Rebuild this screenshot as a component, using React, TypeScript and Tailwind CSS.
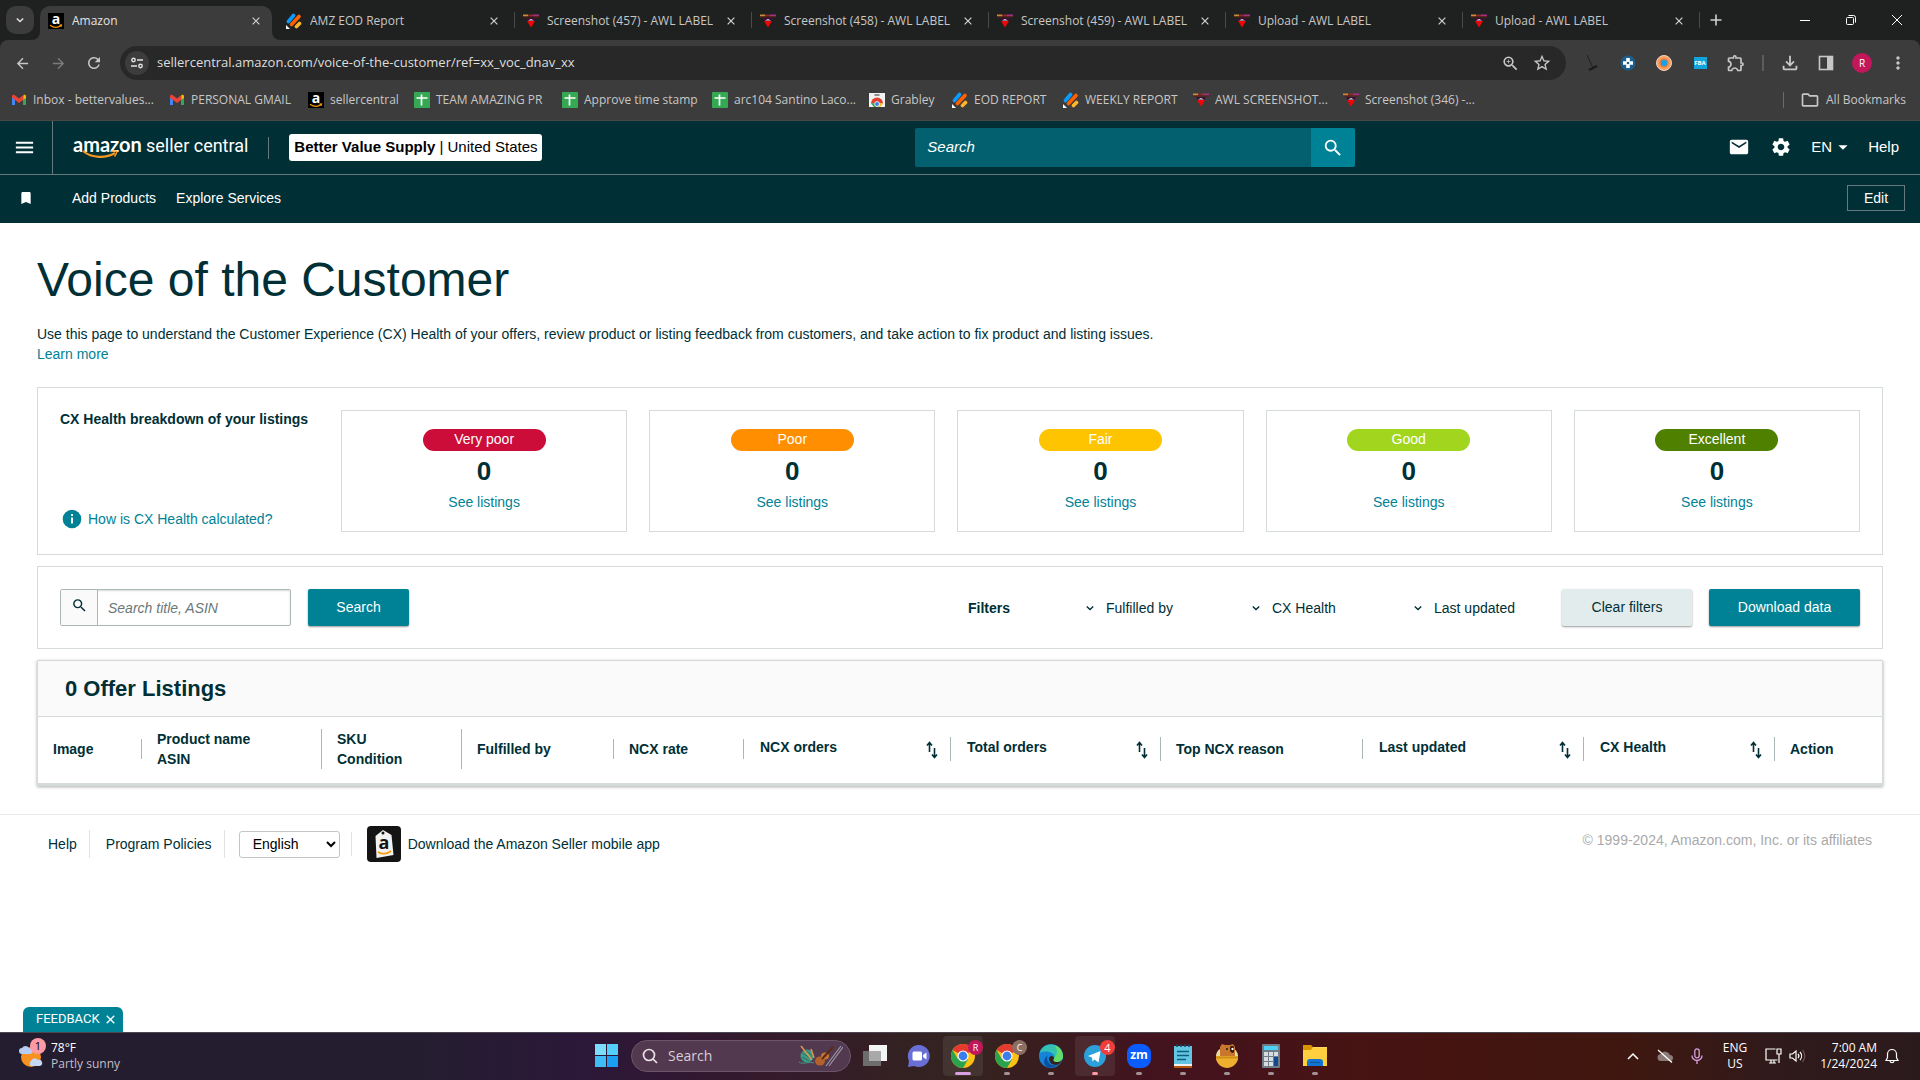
import type { ReactNode } from "react";
import {
  MdArrowBack,
  MdArrowForward,
  MdRefresh,
  MdZoomIn,
  MdStarBorder,
  MdOutlineExtension,
  MdOutlineFileDownload,
  MdMoreVert,
  MdMail,
  MdSettings,
  MdSearch,
  MdBookmark,
  MdMenu,
  MdArrowDropDown,
  MdOutlineFolder,
} from "react-icons/md";

/* -----------------------------Small icons-------------------------------- */

const AmazonIcon = () => (
  <svg viewBox="0 0 16 16" className="size-4 shrink-0 overflow-visible">
    <rect width="16" height="16" fill="#000" />
    <text x="8" y="11" textAnchor="middle" fontFamily="Open Sans, sans-serif" fontWeight="700" fontSize="14" fill="#fff">a</text>
    <path d="M2 12.200c3.500 2.400 8 2.400 11 .6M11.500 12.200l2-.2-.5 1.800" stroke="#f90" strokeWidth="1.200" fill="none" />
  </svg>
);

const JotIcon = () => (
  <svg viewBox="0 0 16 16" className="size-4 shrink-0" strokeLinecap="round" fill="none">
    <path d="M2.500 8.500 7.500 2.500" stroke="#0a9bff" strokeWidth="3.600" />
    <path d="M5.500 11.500 13 3.500" stroke="#ff6100" strokeWidth="3.600" />
    <path d="M10.500 13.500 13.500 10.500" stroke="#ffb629" strokeWidth="3.600" />
    <path d="M0 12v4h4z" fill="#fff" />
  </svg>
);

const AwlIcon = () => (
  <svg viewBox="0 0 16 16" className="size-4 shrink-0">
    <path d="M0 2.500h5" stroke="#c98a3a" strokeWidth="2" />
    <path d="M5 2.500h5" stroke="#8b2b2b" strokeWidth="2" />
    <path d="M10 2.500h6" stroke="#a5307f" strokeWidth="2" />
    <path d="M0 4h16" stroke="#5b1a12" strokeWidth="1" />
    <path d="M3 5h10l-1.500 3h-7z" fill="#3c1030" />
    <path d="M5 7.500 8 6l3 1.500z" fill="#dfe6ff" />
    <path d="M4 8h8L8 14.500z" fill="#f00505" />
  </svg>
);

const GmailIcon = () => (
  <svg viewBox="0 0 16 16" className="size-4 shrink-0">
    <path d="M1 4.500v8.500h3V7z" fill="#4285f4" />
    <path d="M15 4.500v8.500h-3V7z" fill="#34a853" />
    <path d="M12 4.200V8l3-2.300V4.300c0-1.500-1.500-2-2.500-1.200z" fill="#fbbc04" />
    <path d="M1 4.300C1 2.800 2.500 2.300 3.500 3.100L8 6.600l4.500-3.500V7.700L8 11 1 5.700z" fill="#ea4335" />
  </svg>
);

const SheetIcon = () => (
  <svg viewBox="0 0 16 16" className="size-4 shrink-0">
    <rect width="16" height="16" rx="1" fill="#34a853" />
    <path d="M2.500 6h11M7.500 2.500v11" stroke="#fff" strokeWidth="1.700" />
  </svg>
);

const GrableyIcon = () => (
  <svg viewBox="0 0 16 16" className="size-4 shrink-0">
    <path d="M0 1h16v14H0z" fill="#f1f1f1" />
    <path d="M5.500 3h5" stroke="#555" strokeWidth="1.300" />
    <path d="M2 11.500a6 6 0 0 1 12 0z" fill="#e4402f" />
    <path d="M2 11.500 5 15h3l-2-4z" fill="#2ea44f" />
    <path d="M14 11.500 11 15H8l2-4z" fill="#fbc116" />
    <circle cx="8" cy="12" r="2.400" fill="#3b7ded" stroke="#fff" strokeWidth=".8" />
  </svg>
);

const Cross = ({ size = "size-2" }: { size?: string }) => (
  <svg viewBox="0 0 10 10" className={size} stroke="currentColor" strokeWidth="1.500">
    <path d="M.8.8l8.400 8.400M9.200.8.8 9.200" />
  </svg>
);

const SmallChevron = () => (
  <svg viewBox="0 0 10 8" className="w-2 h-2 shrink-0" fill="none" stroke="currentColor" strokeWidth="1.700">
    <path d="M1 2l4 4 4-4" />
  </svg>
);

const SortIcon = () => (
  <svg viewBox="0 0 12 18" className="w-3 h-[18px] shrink-0" fill="none" stroke="currentColor" strokeWidth="1.600">
    <path d="M3.500 11V2M1 4.500 3.500 1.500 6 4.500" />
    <path d="M8.500 7v9M6 13.500l2.500 3 2.500-3" />
  </svg>
);

/* -----------------------------Browser chrome-------------------------------- */

const tabs = [
  { title: "Amazon", icon: <AmazonIcon />, active: true },
  { title: "AMZ EOD Report", icon: <JotIcon /> },
  { title: "Screenshot (457) - AWL LABEL", icon: <AwlIcon /> },
  { title: "Screenshot (458) - AWL LABEL", icon: <AwlIcon /> },
  { title: "Screenshot (459) - AWL LABEL", icon: <AwlIcon /> },
  { title: "Upload - AWL LABEL", icon: <AwlIcon /> },
  { title: "Upload - AWL LABEL", icon: <AwlIcon /> },
];

const bookmarks = [
  { title: "Inbox - bettervalues...", icon: <GmailIcon />, width: "w-[138px]" },
  { title: "PERSONAL GMAIL", icon: <GmailIcon />, width: "w-[119px]" },
  { title: "sellercentral", icon: <AmazonIcon />, width: "w-[86px]" },
  { title: "TEAM AMAZING PR", icon: <SheetIcon />, width: "w-[128px]" },
  { title: "Approve time stamp", icon: <SheetIcon />, width: "w-[130px]" },
  { title: "arc104 Santino Laco...", icon: <SheetIcon />, width: "w-[137px]" },
  { title: "Grabley", icon: <GrableyIcon />, width: "w-[63px]" },
  { title: "EOD REPORT", icon: <JotIcon />, width: "w-[91px]" },
  { title: "WEEKLY REPORT", icon: <JotIcon />, width: "w-[110px]" },
  { title: "AWL SCREENSHOT...", icon: <AwlIcon />, width: "w-[130px]" },
  { title: "Screenshot (346) -...", icon: <AwlIcon />, width: "w-[128px]" },
];

function TabStrip() {
  return (
    <div className="flex h-10 bg-[#1f2120] pl-[6px]">
      <button aria-label="Search tabs" className="mt-[6px] mr-[6px] size-7 shrink-0 rounded-[10px] bg-[#3c3c3c] flex items-center justify-center text-[#e3e3e3]">
        <SmallChevron />
      </button>
      {tabs.map((tab, i) => (
        <div key={i} className={tab.active ? "relative w-[238px] pt-[6px] pr-[6px]" : "relative w-[237px] pt-[6px] pr-[5px]"}>
          <div className={tab.active ? "relative h-[34px] rounded-t-[10px] bg-[#3c3c3c] pb-[5px] pl-2 pr-3 flex items-center gap-2" : "h-[34px] pb-[5px] pl-2 pr-3 flex items-center gap-2"}>
            {tab.icon}
            <span className={tab.active ? "flex-1 truncate text-[#e3e3e3]" : "flex-1 truncate text-[#c7c7c7]"}>{tab.title}</span>
            <button aria-label="Close tab" className="text-[#d0d0d0]"><Cross /></button>
            {tab.active && (
              <>
                <svg viewBox="0 0 8 8" className="absolute -left-2 bottom-0 size-2" fill="#3c3c3c"><path d="M8 0v8H0a8 8 0 0 0 8-8" /></svg>
                <svg viewBox="0 0 8 8" className="absolute -right-2 bottom-0 size-2" fill="#3c3c3c"><path d="M0 0v8h8a8 8 0 0 1-8-8" /></svg>
              </>
            )}
          </div>
          {!tab.active && <span className="absolute right-0 top-3 h-4 w-px bg-[#4a4a4a]" />}
        </div>
      ))}
      <button aria-label="New tab" className="w-8 flex items-center justify-center text-[#d0d0d0]">
        <svg viewBox="0 0 12 12" className="size-3" stroke="currentColor" strokeWidth="1.600"><path d="M6 .5v11M.5 6h11" /></svg>
      </button>
      <div className="ml-auto flex text-white">
        <button aria-label="Minimize" className="w-[46px] flex items-center justify-center"><svg viewBox="0 0 10 10" className="size-[10px]" stroke="currentColor"><path d="M0 5.500h10" /></svg></button>
        <button aria-label="Restore" className="w-[46px] flex items-center justify-center">
          <svg viewBox="0 0 10 10" className="size-[10px]" fill="none" stroke="currentColor">
            <rect x=".5" y="2.500" width="7" height="7" rx="1" />
            <path d="M2.500.5H7.500a2 2 0 0 1 2 2V7.500" />
          </svg>
        </button>
        <button aria-label="Close" className="w-[46px] flex items-center justify-center"><svg viewBox="0 0 10 10" className="size-[10px]" stroke="currentColor"><path d="M0 0l10 10M10 0 0 10" /></svg></button>
      </div>
    </div>
  );
}

function ToolButton({ label, children }: { label: string; children: ReactNode }) {
  return <button aria-label={label} className="w-9 shrink-0 flex items-center justify-center">{children}</button>;
}

function Toolbar() {
  return (
    <div className="bg-[#1f2120]">
      <div className="flex h-[41px] items-stretch rounded-t-lg bg-[#3c3c3c] px-1 pt-[6px] pb-[1px] text-[#c7c7c7]">
        <ToolButton label="Back"><MdArrowBack className="size-[17px]" /></ToolButton>
        <ToolButton label="Forward"><MdArrowForward className="size-[17px] text-[#7c7c7c]" /></ToolButton>
        <ToolButton label="Reload"><MdRefresh className="size-[18px]" /></ToolButton>
        <div className="ml-2 flex flex-1 items-center rounded-full bg-[#282828] pl-[5px] pr-2">
          <span className="size-6 rounded-full bg-[#3c3c3c] flex items-center justify-center">
            <svg viewBox="0 0 12 12" className="size-3" fill="none" stroke="#e3e3e3" strokeWidth="1.400">
              <circle cx="2.500" cy="3" r="1.700" /><path d="M6 3h6M0 9h6" /><circle cx="9.500" cy="9" r="1.700" />
            </svg>
          </span>
          <input aria-label="Address" className="ml-2 flex-1 bg-transparent text-[13px] text-[#dedede] outline-none" defaultValue="sellercentral.amazon.com/voice-of-the-customer/ref=xx_voc_dnav_xx" />
          <button aria-label="Zoom" className="w-8 flex justify-center"><MdZoomIn className="size-[19px]" /></button>
          <button aria-label="Bookmark this tab" className="w-8 flex justify-center"><MdStarBorder className="size-5" /></button>
        </div>
        <div className="ml-2 flex">
          <ToolButton label="Pen tool">
            <svg viewBox="0 0 16 16" className="size-4" fill="none" stroke="#1b1b1b"><path d="M3 0l6 13" strokeWidth=".8" /><path d="M5 15l8-4" strokeWidth="2" /></svg>
          </ToolButton>
          <ToolButton label="Helper">
            <svg viewBox="0 0 16 16" className="size-4"><circle cx="8" cy="8" r="7.500" fill="#1c5f8f" /><path d="M8 3v10M3 8h10" stroke="#fff" strokeWidth="3.600" /><circle cx="8" cy="8" r="1.300" fill="#1c5f8f" /></svg>
          </ToolButton>
          <ToolButton label="Keepa">
            <svg viewBox="0 0 16 16" className="size-4"><circle cx="8" cy="8" r="7.500" fill="#f6a06a" stroke="#fbd3b4" /><circle cx="8" cy="8" r="4.800" fill="#f07f35" /><circle cx="8" cy="8" r="3.200" fill="#1ba0e8" /></svg>
          </ToolButton>
          <ToolButton label="FBA calculator">
            <span className="w-[13px] h-3 bg-[#12a5dd] text-[6px] leading-3 font-bold text-white">FBA</span>
          </ToolButton>
          <ToolButton label="Extensions"><MdOutlineExtension className="size-5" /></ToolButton>
          <span className="mx-2 my-auto h-4 w-[2px] bg-[#5c5c5c]" />
          <ToolButton label="Downloads"><MdOutlineFileDownload className="size-[22px]" /></ToolButton>
          <ToolButton label="Side panel">
            <svg viewBox="0 0 16 16" className="size-4"><rect x="1.500" y="1.500" width="13" height="13" fill="none" stroke="currentColor" strokeWidth="1.600" /><path d="M9 1h6v14H9z" fill="currentColor" /></svg>
          </ToolButton>
          <ToolButton label="Profile"><span className="size-5 rounded-full bg-[#c2185b] text-[10px] leading-5 text-white">R</span></ToolButton>
          <ToolButton label="Menu"><MdMoreVert className="size-5" /></ToolButton>
        </div>
      </div>
    </div>
  );
}

function BookmarksBar() {
  return (
    <nav className="flex h-10 items-center gap-5 border-b border-[#4a4845] bg-[#3c3c3c] pl-[11px] pr-[14px] pb-[1px] text-[#c7c7c7]">
      {bookmarks.map((b) => (
        <a key={b.title} href="#" className={`flex shrink-0 items-center gap-[6px] whitespace-nowrap ${b.width}`}>
          {b.icon}
          {b.title}
        </a>
      ))}
      <span className="ml-auto h-4 w-px bg-[#6a6a6a]" />
      <a href="#" className="-ml-1 flex items-center gap-[6px] whitespace-nowrap"><MdOutlineFolder className="size-5" />All Bookmarks</a>
    </nav>
  );
}

/* -----------------------------Seller Central header-------------------------------- */

function Header() {
  return (
    <header className="bg-[#002f36] text-[15px] text-white">
      <div className="flex h-[54px] items-center border-b border-[#66797d]">
        <button aria-label="Menu" className="flex h-full w-[53px] shrink-0 items-center justify-center border-r border-[#66797d] pr-2">
          <MdMenu className="ml-1 size-[23px]" />
        </button>
        <a href="#" className="relative ml-5 whitespace-nowrap pb-1 leading-6">
          <span className="font-[Lato,sans-serif] text-[20px] font-bold">amazon</span> <span className="font-[Roboto,sans-serif] text-[18px]">seller central</span>
          <svg viewBox="0 0 38 10" className="absolute left-[9px] top-[18px] h-[10px] w-[38px]" fill="none" stroke="#f7981d">
            <path d="M1 1c9 7.500 23 7.500 32 2" strokeWidth="2.200" /><path d="M29 1.500c3-.8 5-.8 5.500 0s-.5 3-2 5" strokeWidth="1.500" />
          </svg>
        </a>
        <span className="ml-5 h-[22px] w-px bg-[#66797d]" />
        <button className="ml-5 h-[27px] w-[253px] whitespace-nowrap rounded-[3px] bg-white pb-px text-black"><b>Better Value Supply</b> | United States</button>
        <form className="mx-auto flex h-[39px] w-[440px]">
          <input aria-label="Search" placeholder="Search" className="min-w-0 flex-1 rounded-l-[2px] bg-[#02606f] px-3 pb-[2px] italic outline-none placeholder:text-white" />
          <button type="button" aria-label="Submit search" className="flex w-11 items-center justify-center rounded-r-[2px] bg-[#008296]"><MdSearch className="size-[22px]" /></button>
        </form>
        <div className="flex items-center pb-[2px] pr-[21px]">
          <a href="#" aria-label="Mail"><MdMail className="size-[22px]" /></a>
          <a href="#" aria-label="Settings" className="ml-5"><MdSettings className="size-[22px]" /></a>
          <button className="ml-[19px] flex items-center">EN<MdArrowDropDown className="size-[22px]" /></button>
          <a href="#" className="ml-[14px]">Help</a>
        </div>
      </div>
      <div className="flex h-12 items-center gap-5 pb-[2px] text-sm">
        <MdBookmark className="ml-[18px] size-4 shrink-0" />
        <a href="#" className="ml-[18px]">Add Products</a>
        <a href="#">Explore Services</a>
        <button className="ml-auto mr-[15px] h-[26px] w-[58px] border border-[#66797d]">Edit</button>
      </div>
    </header>
  );
}

/* -----------------------------Page content-------------------------------- */

const health = [
  { label: "Very poor", color: "bg-[#cc0c39]" },
  { label: "Poor", color: "bg-[#ff8f00]" },
  { label: "Fair", color: "bg-[#ffc400]" },
  { label: "Good", color: "bg-[#a2d61e]" },
  { label: "Excellent", color: "bg-[#508000]" },
];

const columns = [
  { lines: ["Image"], width: "w-[104px]" },
  { lines: ["Product name", "ASIN"], width: "w-[180px]" },
  { lines: ["SKU", "Condition"], width: "w-[140px]" },
  { lines: ["Fulfilled by"], width: "w-[152px]" },
  { lines: ["NCX rate"], width: "w-[130px]" },
  { lines: ["NCX orders"], width: "w-[207px]", sort: true },
  { lines: ["Total orders"], width: "w-[210px]", sort: true },
  { lines: ["Top NCX reason"], width: "w-[202px]" },
  { lines: ["Last updated"], width: "w-[221px]", sort: true },
  { lines: ["CX Health"], width: "w-[191px]", sort: true },
  { lines: ["Action"], width: "w-[107px]" },
];

function HealthBreakdown() {
  return (
    <section className="mt-[23px] flex border border-[#d5dbdb] p-[22px]">
      <div className="flex w-[281px] shrink-0 flex-col justify-between pb-[3px]">
        <h2 className="font-bold leading-[18px]">CX Health breakdown of your listings</h2>
        <a href="#" className="flex items-center gap-[6px] pl-[2px] text-[#008296]">
          <svg viewBox="0 0 20 20" className="size-5"><circle cx="10" cy="10" r="9.300" fill="#008296" /><path d="M10 8.500v6M10 5v2" stroke="#fff" strokeWidth="2" /></svg>
          How is CX Health calculated?
        </a>
      </div>
      <div className="grid flex-1 grid-cols-5 gap-[22px]">
        {health.map((h) => (
          <div key={h.label} className="flex h-[122px] flex-col items-center border border-[#d5dbdb] pt-[18px]">
            <span className={`h-[22px] w-[123px] rounded-full text-center leading-[21px] text-white ${h.color}`}>{h.label}</span>
            <b className="mt-[5px] text-[26px] leading-[30px]">0</b>
            <a href="#" className="mt-[6px] text-[#008296]">See listings</a>
          </div>
        ))}
      </div>
    </section>
  );
}

function FilterBar() {
  return (
    <section className="mt-[11px] flex items-center border border-[#d5dbdb] p-[22px]">
      <div className="flex h-[37px] w-[231px] rounded-[2px] border border-[#aab7b8] shadow-[inset_0_1px_2px_#0f111126]">
        <label htmlFor="listing-search" aria-label="Search title, ASIN" className="flex w-[37px] items-center justify-center border-r border-[#aab7b8] bg-[#fafafa] pb-1"><MdSearch className="size-[17px]" /></label>
        <input id="listing-search" placeholder="Search title, ASIN" className="min-w-0 flex-1 bg-transparent px-[10px] italic outline-none placeholder:text-[#6c7778]" />
      </div>
      <button className="ml-[17px] h-[37px] w-[101px] rounded-[2px] bg-[#008296] pb-px text-white shadow-[0_1px_2px_#0006]">Search</button>
      <b className="ml-auto w-[118px]">Filters</b>
      <button className="flex w-[166px] items-center gap-3"><SmallChevron />Fulfilled by</button>
      <button className="flex w-[162px] items-center gap-3"><SmallChevron />CX Health</button>
      <button className="flex w-[148px] items-center gap-3"><SmallChevron />Last updated</button>
      <button className="h-[37px] w-[130px] rounded-[2px] bg-[#e3eced] pb-px shadow-[0_1px_2px_#0006]">Clear filters</button>
      <button className="ml-[17px] h-[37px] w-[151px] rounded-[2px] bg-[#008296] pb-px text-white shadow-[0_1px_2px_#0006]">Download data</button>
    </section>
  );
}

function Listings() {
  return (
    <section className="mt-[11px] border border-b-[3px] border-[#d5dbdb] shadow-[0_1px_3px_#0005]">
      <h2 className="border-b border-[#d5dbdb] bg-[#fafafa] pl-[27px] text-[22px] font-bold leading-[55px]">0 Offer Listings</h2>
      <table className="w-full table-fixed text-left">
        <thead>
          <tr className="h-[66px]">
            {columns.map((c, i) => (
              <th key={c.lines[0]} className={`px-0 pt-0 pb-[2px] align-middle ${c.width}`}>
                <div className={`flex justify-between leading-5 ${i < columns.length - 1 ? "border-r border-[#aab7b8]" : ""} ${c.sort ? "h-6 pl-4 pr-3" : "pl-[15px]"}`}>
                  <span>{c.lines.map((l) => <span key={l} className="block">{l}</span>)}</span>
                  {c.sort && <button aria-label={`Sort by ${c.lines[0]}`} className="pt-[2px]"><SortIcon /></button>}
                </div>
              </th>
            ))}
          </tr>
        </thead>
      </table>
    </section>
  );
}

function Footer() {
  return (
    <footer className="mt-7 flex items-center border-t border-[#e7e9e9] pl-12 pr-12 pt-[11px]">
      <a href="#" className="border-r border-[#e0e3e3] py-1 pr-3">Help</a>
      <a href="#" className="border-r border-[#e0e3e3] px-4 py-1 pr-3">Program Policies</a>
      <select aria-label="Language" className="ml-[14px] h-[27px] w-[101px] rounded-[3px] border border-[#c3c6c6] bg-white pl-[9px] text-black">
        <option>English</option>
      </select>
      <span className="ml-[11px] h-6 w-px bg-[#e0e3e3]" />
      <a href="#" className="ml-[15px] flex items-center gap-[7px]">
        <svg viewBox="0 0 34 36" className="h-9 w-[34px]">
          <rect width="34" height="36" rx="4" fill="#141414" />
          <path d="M8.500 10 16 4l8.500 5 2 20-17 3z" fill="#f2f2f2" />
          <circle cx="16" cy="7" r="1.500" fill="#141414" />
          <text x="17" y="23" textAnchor="middle" fontFamily="Open Sans, sans-serif" fontWeight="700" fontSize="18" fill="#141414">a</text>
          <path d="M11 26c4 2.500 9 2 13-1" stroke="#f90" strokeWidth="1.600" fill="none" />
        </svg>
        Download the Amazon Seller mobile app
      </a>
      <small className="ml-auto pb-2 text-sm text-[#aaa]">© 1999-2024, Amazon.com, Inc. or its affiliates</small>
    </footer>
  );
}

/* -----------------------------Taskbar-------------------------------- */

const ChromeIcon = () => (
  <svg viewBox="0 0 24 24" className="size-6">
    <circle cx="12" cy="12" r="12" fill="#fbc116" />
    <path d="M12 12 1.600 6A12 12 0 0 1 22.400 6z" fill="#e33b2e" />
    <path d="M1.600 6A12 12 0 0 0 12 24l5.200-9L12 12 6.800 15z" fill="#2ba24c" />
    <circle cx="12" cy="12" r="5.500" fill="#fff" />
    <circle cx="12" cy="12" r="4.400" fill="#3b7ded" />
  </svg>
);

const apps: { name: string; icon: ReactNode; badge?: string; badgeColor?: string; box?: boolean; mark?: string }[] = [
  {
    name: "Task view",
    icon: (
      <svg viewBox="0 0 24 24" className="size-6"><path d="M6 1h18v16H6z" fill="#f4f4f4" /><path d="M0 7h18v15H0z" fill="#6d6d6d" /><path d="M6 7h12v10H6z" fill="#a9a9a9" /></svg>
    ),
  },
  {
    name: "Chat",
    icon: (
      <svg viewBox="0 0 24 24" className="size-6"><path d="M12 1a11 11 0 1 1-5 20.900L1 23l1-6A11 11 0 0 1 12 1" fill="#6a6fd6" /><rect x="5.500" y="7.500" width="9.500" height="9" rx="1.500" fill="#fff" /><path d="m16 11 3.500-2.500v7L16 13z" fill="#fff" /></svg>
    ),
  },
  { name: "Chrome", icon: <ChromeIcon />, badge: "R", badgeColor: "bg-[#c2185b] text-[9px]", box: true, mark: "w-4 bg-[#d8a0e0]" },
  { name: "Chrome work", icon: <ChromeIcon />, badge: "C", badgeColor: "bg-[#8d6e63] text-[9px]", mark: "w-[6px] bg-[#a09295]" },
  {
    name: "Edge",
    mark: "w-[6px] bg-[#a09295]",
    icon: (
      <svg viewBox="0 0 24 24" className="size-6">
        <circle cx="12" cy="12" r="12" fill="#1583d8" />
        <path d="M.5 9A12 12 0 0 1 24 12c0 4-3 6-6 6-3.500 0-4.500-1.500-3-3.500C17 10 9 5 .5 9" fill="#35c1b1" />
        <path d="M15 1a12 12 0 0 1 9 11c0 4-3 6-6 6-3 0-4.500-1.500-3-3.500C19 10 19 5 15 1" fill="#63dd66" />
        <path d="M8 14c0 5 5 9 11 7A12 12 0 0 1 8 23c-4-3-4-8 1-12-.7 1-1 2-1 3" fill="#0b4f9f" />
        <path d="M15 14.500c-1.500 2-.5 3.500 3 3.500 2 0 4-.6 5-2.500-.5 2-2 4-3.500 5-5 1.500-9.500-1.500-9.500-5.500 0-4 5-4 5-.5" fill="#33221f" />
      </svg>
    ),
  },
  {
    name: "Telegram",
    badge: "4",
    badgeColor: "bg-[#f03e3a] text-[11px]",
    box: true,
    mark: "w-[6px] bg-[#ff99a4]",
    icon: (
      <svg viewBox="0 0 24 24" className="size-6"><circle cx="12" cy="12" r="11" fill="#2ba0da" /><path d="m5 12 12.500-5-2 11.500-4-3-2 2-.5-4z" fill="#fff" /></svg>
    ),
  },
  {
    name: "Zoom",
    mark: "w-[6px] bg-[#a09295]",
    icon: <span className="size-6 rounded-[9px] bg-[#0b5cff] text-center text-[12px] font-bold leading-[22px] text-white">zm</span>,
  },
  {
    name: "Notepad",
    mark: "w-[6px] bg-[#a09295]",
    icon: (
      <svg viewBox="0 0 24 24" className="size-6">
        <path d="M3 2h18v19H3z" fill="#62c6e3" /><path d="M3 20h18v2H3z" fill="#f1f1f1" /><path d="M3 22h18v2H3z" fill="#b2590f" />
        <path d="M6 7.500h12M6 11.500h12M6 15.500h9" stroke="#0f5d7d" strokeWidth="1.500" />
        <path d="M6 0v3M10 0v3M14 0v3M18 0v3" stroke="#144a63" strokeWidth="1.500" />
      </svg>
    ),
  },
  {
    name: "Honeycam",
    mark: "w-[6px] bg-[#a09295]",
    icon: (
      <svg viewBox="0 0 24 24" className="size-6">
        <path d="M1 12C1 9 3 6 5 5h14c2 1 4 4 4 7a11 11 0 0 1-22 0" fill="#e9dca0" />
        <path d="M5 13V3l2-3 3 1h5l3-1 2 3v10z" fill="#c9772c" />
        <path d="M1 12h22v3c-1 5-6 9-11 9S2 20 1 15z" fill="#eeb02e" /><path d="M1 12.500h22v2H1z" fill="#d08e16" />
        <path d="M15 4c0-3 4-3 4 0v4c-2 2-4 0-4-2z" fill="#2b1608" /><circle cx="17.500" cy="5" r="1.200" fill="#fff" /><circle cx="12" cy="5" r="1" fill="#2b1608" />
      </svg>
    ),
  },
  {
    name: "Calculator",
    mark: "w-[6px] bg-[#a09295]",
    icon: (
      <svg viewBox="0 0 24 24" className="size-6">
        <rect x="3" width="18" height="24" rx="1" fill="#6f7b85" /><path d="M5 2h14v4H5z" fill="#4cd0f5" />
        <path d="M5 8h4v4H5zM10 8h4v4h-4zM15 8h4v4h-4zM5 13h4v4H5zM10 13h4v4h-4zM5 18h4v4H5zM10 18h4v4h-4z" fill="#d7dde2" /><path d="M15 13h4v9h-4z" fill="#104a8e" />
      </svg>
    ),
  },
  {
    name: "File Explorer",
    mark: "w-[6px] bg-[#a09295]",
    icon: (
      <svg viewBox="0 0 24 24" className="size-6"><path d="M0 1h8l3 3v5H0z" fill="#d99400" /><path d="M10 3h14v6H0V6h8z" fill="#ffd75e" /><path d="M0 6h9l2-2h13v18H0z" fill="#ffcf3f" /><path d="M4 22v-4a3 3 0 0 1 3-3h10a3 3 0 0 1 3 3v4z" fill="#1276d0" /><path d="M7 18.500h10" stroke="#0b55a0" /></svg>
    ),
  },
];

function Taskbar() {
  return (
    <footer className="grid h-12 grid-cols-[1fr_auto_1fr] items-center border-t border-[#4b4650] bg-[linear-gradient(90deg,#241d2f_0%,#241d2f_22%,#2b1739_30%,#351a2c_40%,#33241f_50%,#43131f_60%,#471313_71%,#40170f_84%,#2f1a1b_93%,#2b1a1d_100%)] pb-[2px] text-white">
      <button className="flex items-center gap-2 pl-[19px] text-left leading-4">
        <span className="relative">
          <svg viewBox="0 0 24 24" className="size-6">
            <circle cx="12" cy="13" r="10" fill="#f79222" />
            <path d="M3 10a3 3 0 0 1 0-6 4 4 0 0 1 7 0 3 3 0 0 1 1 6z" fill="#b7cdf2" />
            <path d="M12 22a3 3 0 0 1 0-5 4 4 0 0 1 7-1 3 3 0 0 1 2 6z" fill="#c6d6f5" />
          </svg>
          <span className="absolute -top-[6px] left-[11px] size-4 rounded-full bg-[#ff99a4] text-center text-[11px] text-black">1</span>
        </span>
        <span>78°F<span className="block text-[#c3bfc6]">Partly sunny</span></span>
      </button>
      <div className="flex items-center">
        <button aria-label="Start" className="flex w-12 justify-center pr-[2px]">
          <svg viewBox="0 0 24 24" className="size-[23px]" fill="#3fbcf6"><path d="M0 0h11.500v11.500H0z" fill="#7cdcfb" /><path d="M12.500 0H24v11.500H12.500z" fill="#53cdf9" /><path d="M0 12.500h11.500V24H0z" /><path d="M12.500 12.500H24V24H12.500z" fill="#1a9ff5" /></svg>
        </button>
        <div className="mr-[2px] flex h-8 w-[220px] items-center rounded-full border border-[#6c5566] bg-[#53394f] pl-[10px] pr-[7px]">
          <svg viewBox="0 0 16 16" className="size-4 shrink-0" fill="none" stroke="#e8e0e6" strokeWidth="1.700"><circle cx="7" cy="7" r="5.500" /><path d="m11 11 4 4" /></svg>
          <input aria-label="Search Windows" placeholder="Search" className="ml-[10px] min-w-0 flex-1 bg-transparent text-sm outline-none placeholder:text-[#d8ced5]" />
          <svg viewBox="0 0 46 24" className="h-6 w-[46px] shrink-0" fill="none">
            <circle cx="10" cy="12" r="6.500" fill="#3e9a86" /><path d="M5 9l10 6M5 13l7 4M8 6l8 6" stroke="#2a7363" />
            <path d="M4 2l11 14M14 5l3 9" stroke="#d9984f" strokeWidth="1.500" /><path d="M2 18c4 3 10-1 15 1" stroke="#3e9a86" />
            <ellipse cx="23" cy="17" rx="5" ry="4.500" fill="#b4622a" /><ellipse cx="28" cy="12" rx="4" ry="3.500" fill="#c57434" /><path d="m25 15 11-12" stroke="#5a2a12" strokeWidth="2" />
            <path d="m29 22 15-20M32 22 46 3" stroke="#9a97a5" strokeWidth="1.200" />
          </svg>
        </div>
        {apps.map((app) => (
          <button key={app.name} aria-label={app.name} className="flex w-11 justify-center">
            <span className={`relative flex size-10 items-center justify-center rounded ${app.box ? "bg-white/8" : ""}`}>
              {app.icon}
              {app.badge && <span className={`absolute right-0 top-1 size-[15px] rounded-full text-center leading-[15px] ${app.badgeColor}`}>{app.badge}</span>}
              {app.mark && <span className={`absolute bottom-[1px] h-[3px] rounded-full ${app.mark}`} />}
            </span>
          </button>
        ))}
      </div>
      <div className="flex items-center justify-end pr-[21px] leading-4">
        <svg viewBox="0 0 12 8" className="h-2 w-3" fill="none" stroke="#fff" strokeWidth="1.500"><path d="m1 7 5-5 5 5" /></svg>
        <svg viewBox="0 0 16 14" className="ml-[18px] h-[14px] w-4"><path d="M4 12a3.500 3.500 0 0 1 0-7 5 5 0 0 1 9 1 3 3 0 0 1 0 6z" fill="#8c7a78" /><path d="m1 1 14 12.500" stroke="#fff" strokeWidth="1.300" /></svg>
        <svg viewBox="0 0 12 16" className="ml-[18px] h-4 w-3" fill="none" stroke="#d8a0e0" strokeWidth="1.300"><rect x="3.800" y=".8" width="4.400" height="9" rx="2.200" /><path d="M1 7.500a5 5 0 0 0 10 0M6 12.500V16" /></svg>
        <span className="ml-5 text-center">ENG<span className="block">US</span></span>
        <svg viewBox="0 0 17 16" className="ml-[18px] h-4 w-[17px]" fill="none" stroke="#fff" strokeWidth="1.200"><path d="M10.500 1H1v11h11.500M4 15h7M6 12v3M9 12v3" /><path d="M12 1h4v5h-4zM14 6v9" /></svg>
        <svg viewBox="0 0 17 16" className="ml-[7px] h-4 w-[17px]" fill="none" stroke="#fff" strokeWidth="1.200"><path d="M1 6v4h2.500L7 13V3L3.500 6zM9 6a3 3 0 0 1 0 4M11 4a6 6 0 0 1 0 8" /><path d="M13.500 2a9 9 0 0 1 0 12" stroke="#6b5553" /></svg>
        <span className="ml-[14px] text-right">7:00 AM<span className="block">1/24/2024</span></span>
        <svg viewBox="0 0 14 16" className="ml-2 h-4 w-[14px]" fill="none" stroke="#fff" strokeWidth="1.200"><path d="M1 12.500h12l-1.500-3V6a4.500 4.500 0 0 0-9 0v3.500zM5 13c.3 2.200 3.700 2.200 4 0" /></svg>
      </div>
    </footer>
  );
}

export default function App() {
  return (
    <div className="flex min-h-screen flex-col bg-white font-['Open_Sans','Noto_Sans',sans-serif] text-xs">
      <TabStrip />
      <Toolbar />
      <BookmarksBar />
      <div className="relative flex-1 font-['Liberation_Sans',Arial,sans-serif] text-sm text-[#002f36]">
        <Header />
        <main className="px-[37px] pt-[27px]">
          <h1 className="text-[48px] leading-[60px]">Voice of the Customer</h1>
          <p className="mt-[14px] leading-5">Use this page to understand the Customer Experience (CX) Health of your offers, review product or listing feedback from customers, and take action to fix product and listing issues.</p>
          <a href="#" className="leading-5 text-[#008296]">Learn more</a>
          <HealthBreakdown />
          <FilterBar />
          <Listings />
        </main>
        <Footer />
        <button className="absolute bottom-0 left-[23px] flex h-[25px] w-[100px] items-center gap-[6px] rounded-t-md bg-[#008296] pl-[13px] font-[Roboto,sans-serif] text-[13px] text-white">
          FEEDBACK <Cross size="size-[9px]" />
        </button>
      </div>
      <Taskbar />
    </div>
  );
}
